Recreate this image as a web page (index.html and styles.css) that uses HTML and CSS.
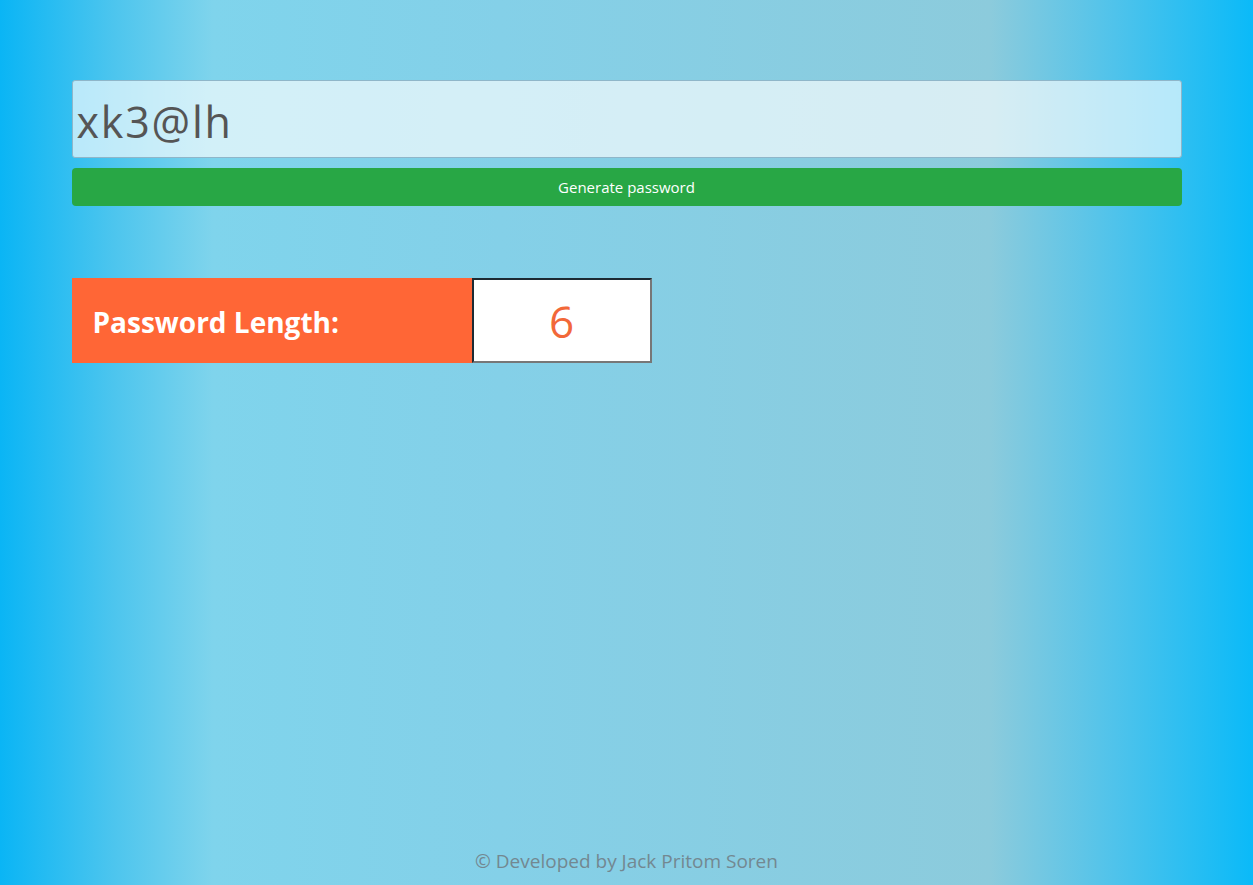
FILE: index.html
```html
<!DOCTYPE html>
<html lang="en">
<head>
<meta charset="utf-8">
<title>Password Generator</title>
<link rel="stylesheet" href="styles.css">
</head>
<body>
<main class="container">
  <input class="password" type="text" value="xk3@lh" readonly>
  <button class="generate">Generate password</button>
  <div class="length-row">
    <div class="length-label">Password Length:</div>
    <div class="length-value">6</div>
  </div>
</main>
<footer class="footer">© Developed by Jack Pritom Soren</footer>
</body>
</html>
```
FILE: styles.css
```css
html, body {
  margin: 0;
  height: 100%;
}
body {
  font-family: "Open Sans", "Noto Sans", sans-serif;
  background: linear-gradient(to right, #0ab5f5 0%, #4cc5ee 9%, #7fd4ec 17%, #84d0e8 40%, #8ccbdc 79%, #4fc3eb 89%, #0abaf8 100%);
  display: flex;
  flex-direction: column;
  min-height: 885px;
  box-sizing: border-box;
}
.container {
  width: 1110px;
  margin: 0 auto;
  padding-top: 80px;
  flex: 1;
  display: flex;
  flex-direction: column;
}
.password {
  box-sizing: border-box;
  height: 78px;
  width: 100%;
  border: 1px solid #8fb6c9;
  border-radius: 3px;
  background: rgba(255, 255, 255, 0.65);
  font-family: "Open Sans", "Noto Sans", sans-serif;
  font-size: 43px;
  letter-spacing: 1.8px;
  color: #555;
  padding: 4px 4px 0;
  margin: 0;
  outline: none;
}
.generate {
  margin-top: 10px;
  height: 38px;
  width: 100%;
  border: none;
  border-radius: 4px;
  background: #28a745;
  color: #fff;
  font-family: "Open Sans", "Noto Sans", sans-serif;
  font-size: 15px;
  padding: 0;
}
.length-row {
  margin-top: 72px;
  display: flex;
  height: 85px;
}
.length-label {
  width: 400px;
  background: #ff6636;
  color: #fff;
  font-weight: 700;
  font-size: 28px;
  display: flex;
  align-items: center;
  padding-left: 21px;
  padding-top: 2px;
  box-sizing: border-box;
}
.length-value {
  width: 180px;
  box-sizing: border-box;
  background: #fff;
  border-style: solid;
  border-width: 2px;
  border-color: #1d2a33 #777 #777 #1d2a33;
  color: #f26839;
  font-size: 44px;
  display: flex;
  align-items: center;
  justify-content: center;
}
.footer {
  text-align: center;
  color: #738891;
  font-size: 19px;
  padding-bottom: 11px;
}
```
